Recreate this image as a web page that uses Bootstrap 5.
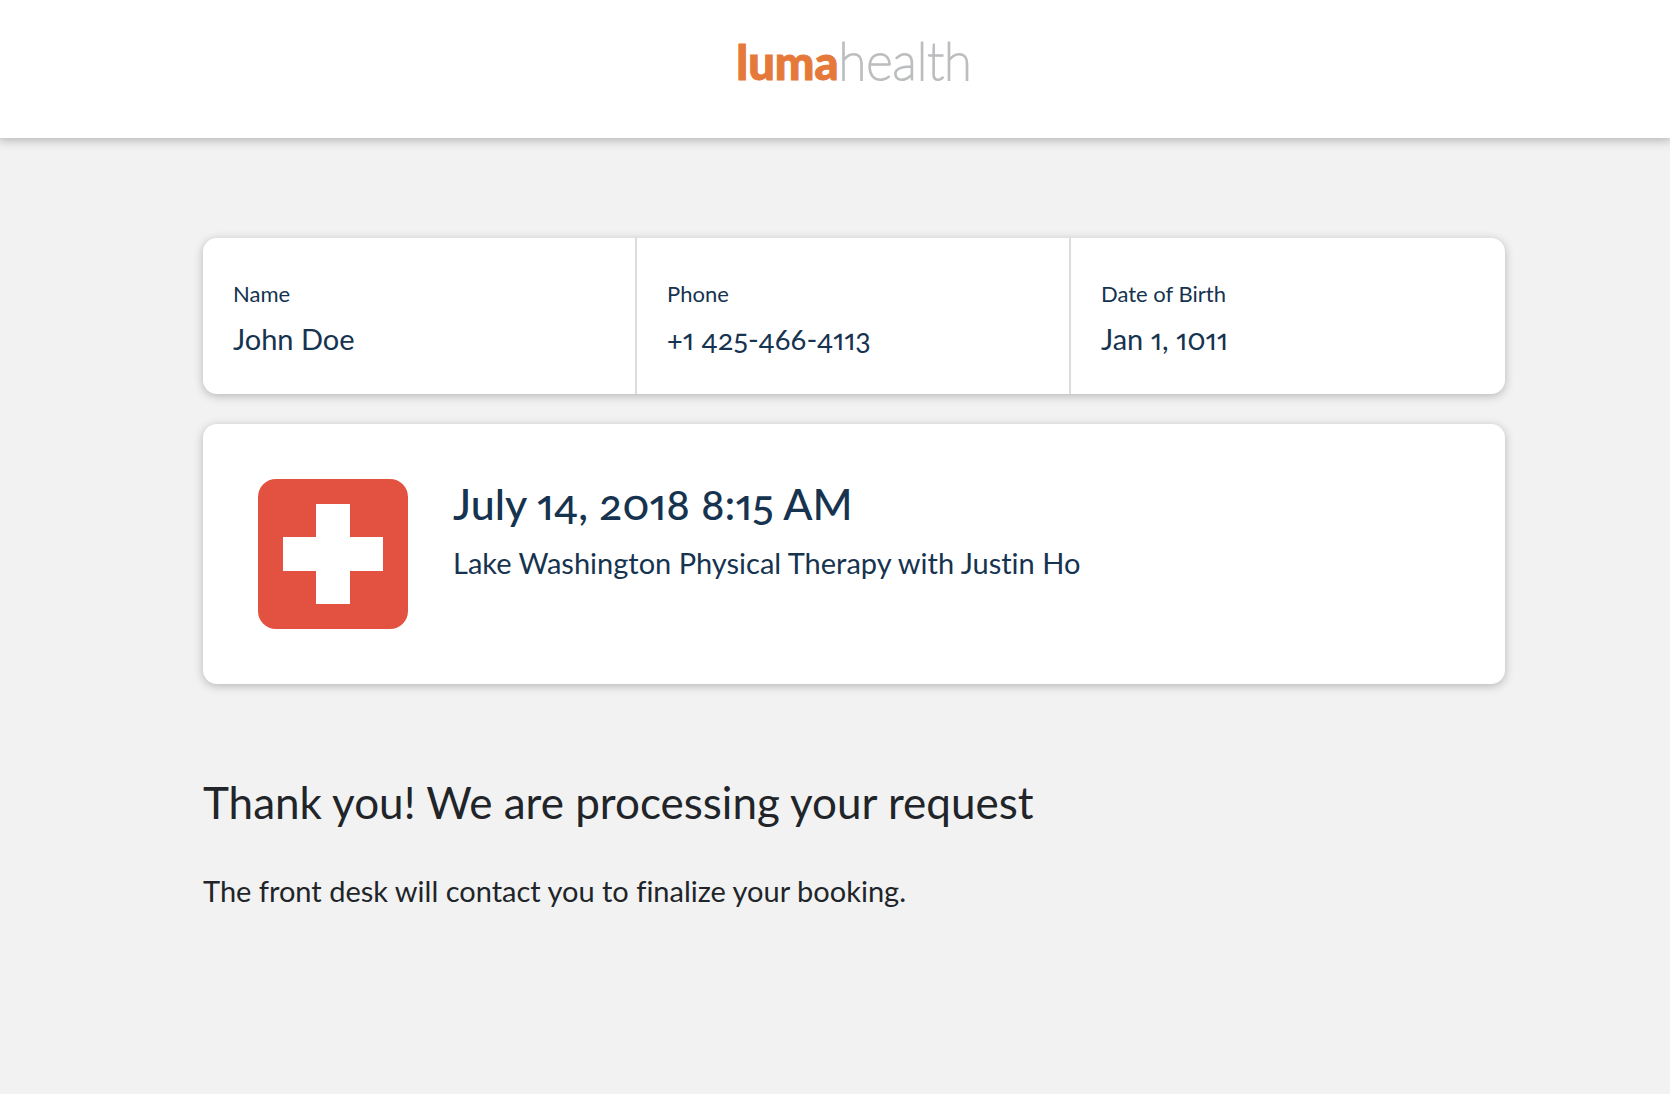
<!DOCTYPE html>
<html lang="en">
<head>
<meta charset="utf-8">
<meta name="viewport" content="width=device-width, initial-scale=1">
<title>Luma Health</title>
<link href="https://cdn.jsdelivr.net/npm/bootstrap@5.3.0/dist/css/bootstrap.min.css" rel="stylesheet">
<style>
body { background: #f2f2f2; color: #212529; font-family: Lato, "Open Sans", sans-serif; font-size: 29px; line-height: 40px; font-variant-numeric: oldstyle-nums proportional-nums; font-variant-ligatures: no-common-ligatures; }
.site-header { padding: 29px 0 45px 38px; box-shadow: 0 0 10px 2px rgba(0,0,0,.28); }
.brand { font-size: 51px; line-height: 64px; color: #bbbdbf; font-weight: 100; -webkit-text-stroke: 2px #bbbdbf; }
.brand strong { color: #e5793a; font-weight: 900; font-size: 47px; line-height: 1; -webkit-text-stroke: 1px #e5793a; }
.page { padding: 100px 0 0 38px; }
.content { max-width: 1302px; }
.panel { border: 0; border-radius: 14px; color: #16334f; box-shadow: 0 2px 10px rgba(0,0,0,.25); }
.cell { padding: 39px 30px 35px; }
.cell:not(:last-child) { border-right: 2px solid #dcdcdc; }
.cell dt { font-size: 22px; line-height: 34px; font-weight: 400; margin-bottom: 8px; }
.visit { padding: 55px; gap: 45px; margin-top: 30px; }
.title { line-height: 50px; margin: 0; }
.visit .title { font-size: 43px; font-weight: 500; margin-bottom: 14px; }
.thanks { padding-top: 93px; }
.thanks .title { font-size: 44px; font-weight: 400; margin-bottom: 44px; }
</style>
</head>
<body>
<header class="site-header bg-white d-flex justify-content-center position-relative">
  <a href="#" class="brand text-decoration-none"><strong>luma</strong>health</a>
</header>
<main class="page">
  <div class="content mx-auto">
    <dl class="panel card flex-row mb-0">
      <div class="cell col-4"><dt>Name</dt><dd class="mb-0">John Doe</dd></div>
      <div class="cell col-4"><dt>Phone</dt><dd class="mb-0">+1 425-466-4113</dd></div>
      <div class="cell col-4"><dt>Date of Birth</dt><dd class="mb-0">Jan 1, 1011</dd></div>
    </dl>
    <section class="panel card visit flex-row">
      <svg class="flex-shrink-0" width="150" height="150" viewBox="0 0 150 150" aria-hidden="true">
        <rect width="150" height="150" rx="18" fill="#e35141"/>
        <path d="M58 25h34v33h33v34H92v33H58V92H25V58h33z" fill="#fff"/>
      </svg>
      <div>
        <h1 class="title">July 14, 2018 8:15 AM</h1>
        <p class="mb-0">Lake Washington Physical Therapy with Justin Ho</p>
      </div>
    </section>
    <section class="thanks">
      <h2 class="title">Thank you! We are processing your request</h2>
      <p class="mb-0">The front desk will contact you to finalize your booking.</p>
    </section>
  </div>
</main>
<script src="https://cdn.jsdelivr.net/npm/bootstrap@5.3.0/dist/js/bootstrap.bundle.min.js"></script>
</body>
</html>
